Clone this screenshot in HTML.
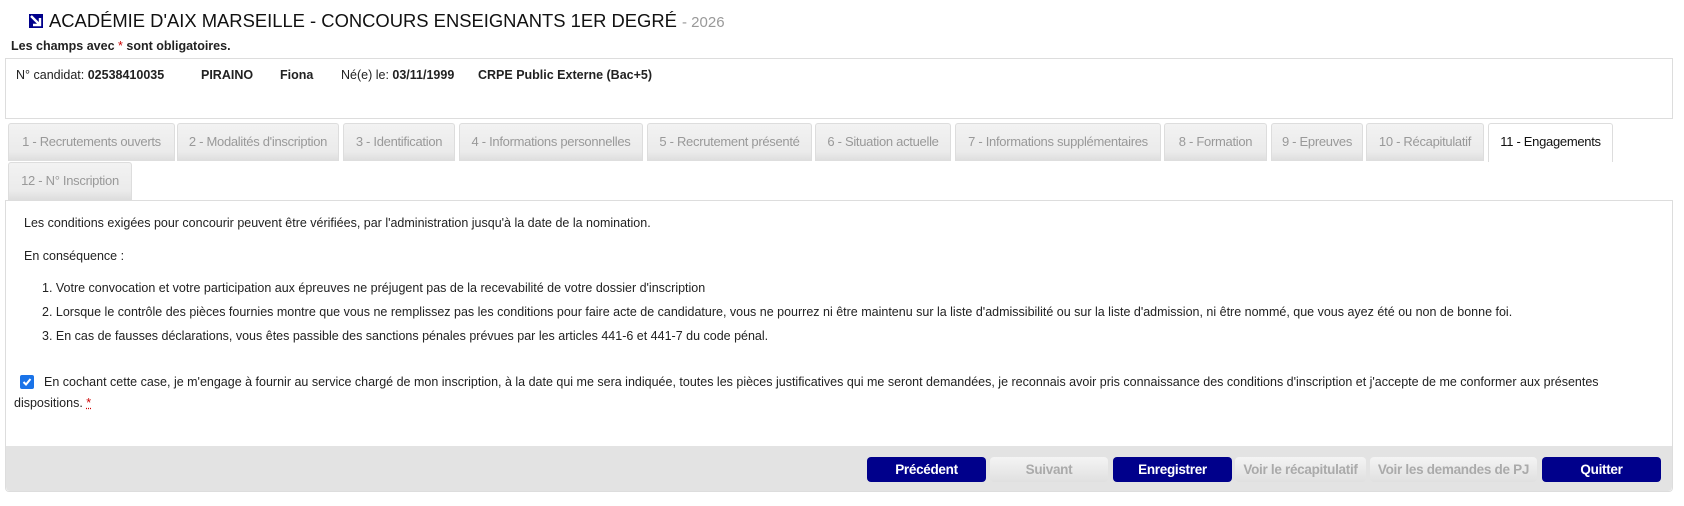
<!DOCTYPE html>
<html><head><meta charset="utf-8">
<style>
*{box-sizing:border-box;margin:0;padding:0}
body{width:1684px;height:506px;background:#fff;font-family:"Liberation Sans",Arial,sans-serif;color:#222;position:relative;overflow:hidden}
.abs{position:absolute}
.title{left:29px;top:10px;font-size:18.4px;white-space:nowrap;color:#111}
.title .yr{color:#999;font-size:15px}
.ico{display:inline-block;width:14px;height:14px;background:#00008b;vertical-align:-1px;margin-right:6px;position:relative}
.req{left:11px;top:39px;font-size:12.5px;font-weight:bold}
.req span{color:#c00;font-weight:normal}
.info{left:5px;top:58px;width:1668px;height:61px;border:1px solid #ddd;font-size:12.5px}
.info span{position:absolute;top:9px;white-space:nowrap}
.tab{position:absolute;height:38px;background:linear-gradient(#f2f2f2,#ebebeb 75%,#ddd);border:1px solid #ddd;border-bottom:none;border-radius:3px 3px 0 0;color:#999;font-size:13px;text-align:center;line-height:36px;white-space:nowrap;letter-spacing:-0.3px}
.tab.act{background:#fff;color:#111;height:39px}
.content{left:5px;top:200px;width:1668px;height:292px;border:1px solid #ddd;border-radius:0 0 4px 4px;font-size:12.5px}
.content p{position:absolute;white-space:nowrap}
.foot{position:absolute;left:0;bottom:0;width:100%;height:45px;background:#e3e3e3;border-radius:0 0 4px 4px}
.btn{position:absolute;top:457px;height:25px;border-radius:4px;font-size:13.5px;font-weight:bold;text-align:center;line-height:25px;white-space:nowrap;letter-spacing:-0.3px}
.on{background:#00008b;color:#fff}
.off{background:linear-gradient(#f4f4f4,#e0e0e0);color:#aaa}
.cb{position:absolute;left:20px;top:375px;width:14px;height:14px;background:#1a73e8;border-radius:2px}
</style></head><body>
<div class="abs title"><span class="ico"><svg width="14" height="14" viewBox="0 0 14 14" style="position:absolute;left:0;top:0"><path d="M2 2 L10 10 M4 11 H11 V4" stroke="#fff" stroke-width="2.4" fill="none"/></svg></span>ACADÉMIE D'AIX MARSEILLE - CONCOURS ENSEIGNANTS 1ER DEGRÉ <span class="yr">- 2026</span></div>
<div class="abs req">Les champs avec <span>*</span> sont obligatoires.</div>
<div class="abs info">
<span style="left:10px">N° candidat: <b>02538410035</b></span>
<span style="left:195px"><b>PIRAINO</b></span>
<span style="left:274px"><b>Fiona</b></span>
<span style="left:335px">Né(e) le: <b>03/11/1999</b></span>
<span style="left:472px"><b>CRPE Public Externe (Bac+5)</b></span>
</div>
<div class="tab" style="left:8px;top:123px;width:167px">1 - Recrutements ouverts</div>
<div class="tab" style="left:177px;top:123px;width:162px">2 - Modalités d'inscription</div>
<div class="tab" style="left:343px;top:123px;width:112px">3 - Identification</div>
<div class="tab" style="left:459px;top:123px;width:184px">4 - Informations personnelles</div>
<div class="tab" style="left:647px;top:123px;width:165px">5 - Recrutement présenté</div>
<div class="tab" style="left:815px;top:123px;width:136px">6 - Situation actuelle</div>
<div class="tab" style="left:955px;top:123px;width:206px">7 - Informations supplémentaires</div>
<div class="tab" style="left:1164px;top:123px;width:103px">8 - Formation</div>
<div class="tab" style="left:1271px;top:123px;width:92px">9 - Epreuves</div>
<div class="tab" style="left:1366px;top:123px;width:118px">10 - Récapitulatif</div>
<div class="tab act" style="left:1488px;top:123px;width:125px">11 - Engagements</div>
<div class="tab" style="left:8px;top:162px;width:124px">12 - N° Inscription</div>
<div class="abs content">
<p style="left:18px;top:15px">Les conditions exigées pour concourir peuvent être vérifiées, par l'administration jusqu'à la date de la nomination.</p>
<p style="left:18px;top:48px">En conséquence :</p>
<p style="left:36px;top:80px">1. Votre convocation et votre participation aux épreuves ne préjugent pas de la recevabilité de votre dossier d'inscription</p>
<p style="left:36px;top:104px">2. Lorsque le contrôle des pièces fournies montre que vous ne remplissez pas les conditions pour faire acte de candidature, vous ne pourrez ni être maintenu sur la liste d'admissibilité ou sur la liste d'admission, ni être nommé, que vous ayez été ou non de bonne foi.</p>
<p style="left:36px;top:128px">3. En cas de fausses déclarations, vous êtes passible des sanctions pénales prévues par les articles 441-6 et 441-7 du code pénal.</p>
<p style="left:38px;top:174px">En cochant cette case, je m'engage à fournir au service chargé de mon inscription, à la date qui me sera indiquée, toutes les pièces justificatives qui me seront demandées, je reconnais avoir pris connaissance des conditions d'inscription et j'accepte de me conformer aux présentes</p>
<p style="left:8px;top:195px">dispositions. <span style="color:#c00;text-decoration:underline dotted">*</span></p>
<div class="foot"></div>
</div>
<div class="cb"><svg width="14" height="14" viewBox="0 0 14 14"><path d="M3.5 7 L6 9.5 L10.5 4" stroke="#fff" stroke-width="2" fill="none"/></svg></div>
<div class="btn on" style="left:867px;width:119px">Précédent</div>
<div class="btn off" style="left:990px;width:118px">Suivant</div>
<div class="btn on" style="left:1113px;width:119px">Enregistrer</div>
<div class="btn off" style="left:1235px;width:131px">Voir le récapitulatif</div>
<div class="btn off" style="left:1370px;width:167px">Voir les demandes de PJ</div>
<div class="btn on" style="left:1542px;width:119px">Quitter</div>
</body></html>
